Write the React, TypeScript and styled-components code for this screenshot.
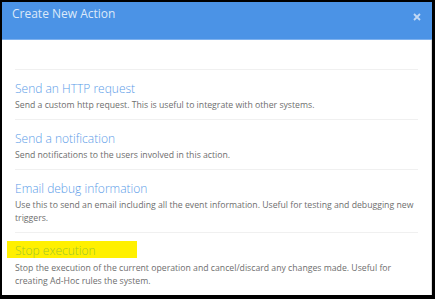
import React from 'react';
import styled, { createGlobalStyle } from 'styled-components';

// Action catalogue shown in the dialog
interface ActionItem {
  title: string;
  description: string;
  highlighted?: boolean;
}

const ACTIONS: ActionItem[] = [
  {
    title: 'Send an HTTP request',
    description: 'Send a custom http request. This is useful to integrate with other systems.'
  },
  {
    title: 'Send a notification',
    description: 'Send notifications to the users involved in this action.'
  },
  {
    title: 'Email debug information',
    description:
      'Use this to send an email including all the event information. Useful for testing and debugging new triggers.'
  },
  {
    title: 'Stop execution',
    description:
      'Stop the execution of the current operation and cancel/discard any changes made. Useful for creating Ad-Hoc rules the system.',
    highlighted: true
  }
];

const GlobalStyle = createGlobalStyle`
  html, body {
    margin: 0;
    padding: 0;
    background: #000;
    font-family: "Open Sans", "Noto Sans", sans-serif;
  }
`;

const Frame = styled.div`
  width: 435px;
  height: 299px;
  box-sizing: border-box;
  padding: 2px 3px 4px 2px;
  background: #000;
`;

const Modal = styled.div`
  width: 430px;
  height: 293px;
  display: flex;
  flex-direction: column;
  background: #fff;
  overflow: hidden;
`;

const Header = styled.div`
  flex-shrink: 0;
  display: flex;
  align-items: flex-start;
  justify-content: space-between;
  padding: 4px 11px 0 10px;
  height: 33px;
  background: #4b93e6;
  border-bottom: 1px solid #7eb1ee;
`;

const Title = styled.h3`
  margin: 0;
  font-size: 12px;
  line-height: 16px;
  font-weight: 400;
  color: #dce9f9;
`;

const CloseButton = styled.button`
  border: none;
  background: transparent;
  padding: 0;
  margin-top: 7px;
  width: 8px;
  height: 8px;
  display: flex;
  cursor: pointer;
`;

const Body = styled.div`
  flex: 1;
  padding: 29px 13px 0 13px;
  border-right: 1px solid #dedede;
`;

const Item = styled.div`
  border-top: 1px solid #f0f0f0;
  padding: 9px 0 7px 0;
`;

const ItemTitle = styled.div<{ $highlighted?: boolean }>`
  font-size: 12px;
  line-height: 20px;
  height: 20px;
  font-weight: 300;
  color: ${({ $highlighted }) => ($highlighted ? '#9fc52c' : '#5b9ce8')};
`;

const Highlight = styled.span`
  display: inline-block;
  margin: -1px 0 0 -8px;
  padding: 0 41px 0 8px;
  height: 17px;
  line-height: 20px;
  vertical-align: top;
  background: #fff000;
`;

const ItemDescription = styled.div`
  font-size: 8.7px;
  line-height: 13px;
  color: #6e6e6e;
`;

function CloseIcon() {
  return (
    <svg width="8" height="8" viewBox="0 0 8 8">
      <path d="M1 1 L7 7 M7 1 L1 7" stroke="#c3d9f4" strokeWidth="1.8" />
    </svg>
  );
}

export default function App() {
  return (
    <Frame>
      <GlobalStyle />
      <Modal>
        <Header>
          <Title>Create New Action</Title>
          <CloseButton aria-label="Close">
            <CloseIcon />
          </CloseButton>
        </Header>
        <Body>
          {ACTIONS.map((action) => (
            <Item key={action.title}>
              <ItemTitle $highlighted={action.highlighted}>
                {action.highlighted ? <Highlight>{action.title}</Highlight> : action.title}
              </ItemTitle>
              <ItemDescription>{action.description}</ItemDescription>
            </Item>
          ))}
        </Body>
      </Modal>
    </Frame>
  );
}
